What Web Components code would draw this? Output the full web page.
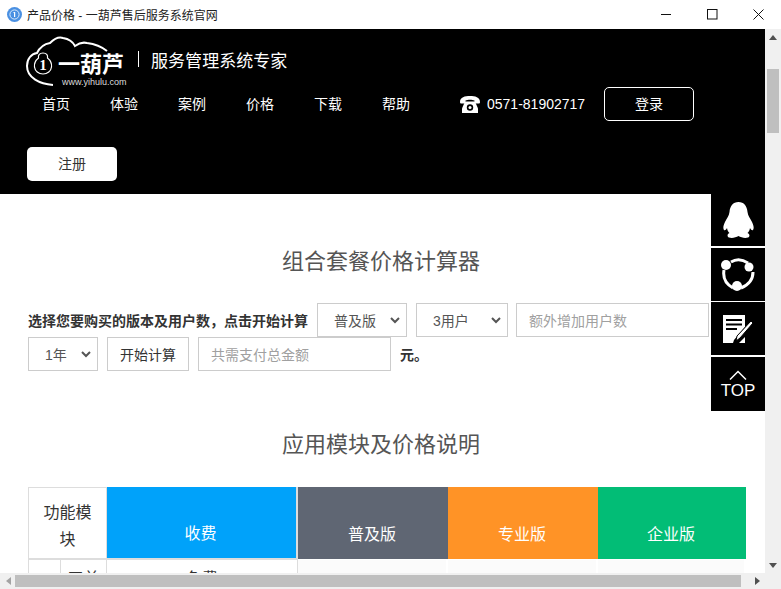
<!DOCTYPE html>
<html lang="zh-CN">
<head>
<meta charset="utf-8">
<title>产品价格 - 一葫芦售后服务系统官网</title>
<style>
html, body { margin: 0; height: 100%; overflow: hidden; background: #fff; }
body { font-family: "Liberation Sans", "Noto Sans CJK SC", sans-serif; }
</style>
</head>
<body>
<app-window title-text="产品价格 - 一葫芦售后服务系统官网">
  <site-header></site-header>
  <price-section heading="组合套餐价格计算器" gap="23">
    <price-calculator></price-calculator>
  </price-section>
  <price-section heading="应用模块及价格说明" gap="24">
    <module-table></module-table>
  </price-section>
  <side-tools slot="overlay"></side-tools>
</app-window>

<script>
const CJK = '"Liberation Sans", "Noto Sans CJK SC", sans-serif';

class AppWindow extends HTMLElement {
    constructor() {
        super();
        this.shadowDOM = this.attachShadow({ mode: "open" });
    }
    connectedCallback() {
        this.shadowDOM.innerHTML = `
        <style>
        * { box-sizing: border-box; margin: 0; padding: 0; }
        :host { display: grid; grid-template-rows: 29px 1fr 16px; grid-template-columns: 1fr 16px; width: 781px; height: 589px; overflow: hidden; font-family: ${CJK}; }
        .title { grid-column: 1 / 3; display: flex; align-items: center; background: #fff; padding-left: 7px; font-size: 12px; color: #222; }
        .title .fav { width: 15px; height: 15px; margin-right: 5px; }
        .title .name { flex: 1; }
        .ctl { width: 46px; height: 29px; display: flex; align-items: center; justify-content: center; }
        .view { position: relative; overflow: hidden; background: #fff; }
        .vbar { background: #f0f0f0; display: flex; flex-direction: column; align-items: center; }
        .hbar { background: #f0f0f0; display: flex; align-items: center; }
        .arrow { flex: none; display: flex; align-items: center; justify-content: center; width: 16px; height: 16px; }
        .vbar .track { flex: 1; width: 100%; padding: 24px 2px 0; }
        .vbar .thumb { width: 12px; height: 64px; background: #bfbfbf; }
        .hbar .track { flex: 1; height: 100%; padding: 2px 0; }
        .hbar .thumb { width: 726px; height: 12px; margin-left: -1px; background: #bfbfbf; }
        .corner { background: #f0f0f0; }
        </style>
        <div class="title">
            <svg class="fav" viewBox="0 0 15 15"><circle cx="7.5" cy="7.5" r="7.5" fill="#4a90e2"/><circle cx="7.5" cy="7.5" r="4.6" fill="none" stroke="#dcebfb" stroke-width="1"/><path d="M7 5h1.2v5H7zM6 6l1-1v1z" fill="#fff"/></svg>
            <span class="name">${this.getAttribute("title-text")}</span>
            <span class="ctl"><svg width="11" height="11" viewBox="0 0 11 11"><path d="M0 5.5h10" stroke="#111" fill="none"/></svg></span>
            <span class="ctl"><svg width="11" height="11" viewBox="0 0 11 11"><rect x=".5" y=".5" width="9.5" height="9.5" stroke="#111" fill="none"/></svg></span>
            <span class="ctl"><svg width="11" height="11" viewBox="0 0 11 11"><path d="M.5.5l10 10M10.5.5l-10 10" stroke="#111" fill="none"/></svg></span>
        </div>
        <div class="view"><slot></slot><slot name="overlay"></slot></div>
        <div class="vbar">
            <span class="arrow"><svg width="8" height="5" viewBox="0 0 8 5"><path d="M4 0l4 5H0z" fill="#505050"/></svg></span>
            <div class="track"><div class="thumb"></div></div>
            <span class="arrow"><svg width="8" height="5" viewBox="0 0 8 5"><path d="M0 0h8L4 5z" fill="#505050"/></svg></span>
        </div>
        <div class="hbar">
            <span class="arrow"><svg width="5" height="8" viewBox="0 0 5 8"><path d="M5 0v8L0 4z" fill="#a3a3a3"/></svg></span>
            <div class="track"><div class="thumb"></div></div>
            <span class="arrow"><svg width="5" height="8" viewBox="0 0 5 8"><path d="M0 0v8l5-4z" fill="#505050"/></svg></span>
        </div>
        <div class="corner"></div>
        `;
    }
}

class SiteHeader extends HTMLElement {
    constructor() {
        super();
        this.shadowDOM = this.attachShadow({ mode: "open" });
    }
    connectedCallback() {
        const links = ["首页", "体验", "案例", "价格", "下载", "帮助"];
        this.shadowDOM.innerHTML = `
        <style>
        * { box-sizing: border-box; margin: 0; padding: 0; }
        :host { display: block; height: 165px; background: #000; color: #fff; font-family: ${CJK}; }
        .brand { display: flex; align-items: center; height: 58px; padding-left: 24px; }
        .logo { position: relative; width: 104px; height: 53px; flex: none; margin-top: 5px; }
        .logo svg { position: absolute; left: 0; top: 0; }
        .logo b { position: absolute; left: 34px; top: 19px; font-size: 22px; line-height: 24px; font-weight: 700; white-space: nowrap; }
        .logo i { position: absolute; left: 38px; top: 43px; font: normal 9px/10px "Liberation Sans", sans-serif; color: #ddd; white-space: nowrap; }
        .sep { width: 1px; height: 16px; background: #fff; margin: 2px 12px 0 10px; }
        .slogan { font-size: 17px; letter-spacing: .05px; margin-top: 3px; }
        .bar { display: flex; align-items: center; height: 34px; }
        nav { display: flex; padding-left: 22px; }
        nav a { width: 68px; padding-left: 20px; font-size: 14px; line-height: 34px; color: #fff; }
        .phone { display: flex; align-items: center; margin-left: 30px; font-size: 14px; }
        .phone svg { margin-right: 7px; }
        .btn { width: 90px; height: 34px; border-radius: 5px; font-size: 14px; display: flex; align-items: center; justify-content: center; padding-bottom: 2px; }
        .login { border: 1px solid #fff; margin-left: 19px; }
        .reg { background: #fff; color: #333; margin: 26px 0 0 27px; }
        </style>
        <div class="brand">
            <div class="logo">
                <svg width="104" height="53" viewBox="0 0 104 53" fill="none">
                    <path d="M29 51C16 50 3 44 3 32 3 25 7 20 13 19 16 13 20 10 26 9 31 4 36 3 39 4 45 5 49 8 51 12 55 9 59 8 63 9 71 10 78 13 83 17" stroke="#fff" stroke-width="2"/>
                    <path d="M19 19C22.500 19 24 21 23.500 24 26 26 28 29 27.500 33 27 37 23.500 40 19 40 14.500 40 11 37 10.500 33 10 29 12 26 14.500 24 14 21 15.500 19 19 19Z" stroke="#fff" stroke-width="1.200"/>
                    <text x="19" y="36" text-anchor="middle" font-family="Liberation Serif, serif" font-weight="700" font-size="15" fill="#fff">1</text>
                </svg>
                <b>一葫芦</b>
                <i>www.yihulu.com</i>
            </div>
            <span class="sep"></span>
            <span class="slogan">服务管理系统专家</span>
        </div>
        <div class="bar">
            <nav>${links.map(l => `<a>${l}</a>`).join("")}</nav>
            <span class="phone">
                <svg width="20" height="17" viewBox="0 0 20 17"><path d="M0 6C0 1 5 0 10 0s10 1 10 6c0 1-.5 1.500-1.500 1.500H16c-1 0-1.500-.5-1.500-1.500V4.500C13 4 12 3.800 10 3.800S7 4 5.500 4.500V6c0 1-.5 1.500-1.500 1.500H1.500C.5 7.500 0 7 0 6Z" fill="#fff"/><path d="M5 5.500h10l3 7v4.500H2v-4.500Z" fill="#fff"/><circle cx="10" cy="11.500" r="3.200" fill="#000"/><circle cx="10" cy="11.500" r="1.500" fill="#fff"/></svg>
                0571-81902717
            </span>
            <span class="btn login">登录</span>
        </div>
        <div class="btn reg">注册</div>
        `;
    }
}

class PriceSection extends HTMLElement {
    constructor() {
        super();
        this.shadowDOM = this.attachShadow({ mode: "open" });
    }
    connectedCallback() {
        this.shadowDOM.innerHTML = `
        <style>
        * { box-sizing: border-box; margin: 0; padding: 0; }
        :host { display: block; padding: 50px 0 0 28px; font-family: ${CJK}; }
        h2 { width: 706px; font-size: 22px; font-weight: 400; line-height: 36px; text-align: center; color: #555; margin-bottom: ${this.getAttribute("gap")}px; }
        </style>
        <h2>${this.getAttribute("heading")}</h2>
        <slot></slot>
        `;
    }
}

class PriceCalculator extends HTMLElement {
    constructor() {
        super();
        this.shadowDOM = this.attachShadow({ mode: "open" });
    }
    connectedCallback() {
        this.shadowDOM.innerHTML = `
        <style>
        * { box-sizing: border-box; margin: 0; padding: 0; }
        :host { display: block; height: 74px; font-family: ${CJK}; color: #333; }
        .row { display: flex; align-items: center; height: 34px; }
        b { font-size: 14px; font-weight: 700; width: 289px; color: #333; }
        .field { height: 34px; border: 1px solid #ccc; background: #fff; font: 14px ${CJK}; color: #555; display: flex; align-items: center; }
        .sel { position: relative; padding-left: 16px; justify-content: flex-start; margin-right: 9px; }
        .sel svg { position: absolute; right: 6px; top: 13px; }
        .inp { padding-left: 12px; color: #a0a0a0; font-size: 14px; width: 193px; }
        .go { width: 82px; justify-content: center; margin-right: 9px; color: #333; }
        .unit { font-size: 14px; font-weight: 700; margin-left: 9px; }
        </style>
        <div class="row">
            <b>选择您要购买的版本及用户数，点击开始计算</b>
            <span class="field sel" style="width:90px">普及版${this.chevron()}</span>
            <span class="field sel" style="width:92px;margin-right:8px">3用户${this.chevron()}</span>
            <span class="field inp">额外增加用户数</span>
        </div>
        <div class="row">
            <span class="field sel" style="width:70px">1年${this.chevron()}</span>
            <span class="field go">开始计算</span>
            <span class="field inp">共需支付总金额</span>
            <span class="unit">元。</span>
        </div>
        `;
    }
    chevron() {
        return `<svg width="10" height="7" viewBox="0 0 10 7"><path d="M1 1l4 4 4-4" fill="none" stroke="#555" stroke-width="2"/></svg>`;
    }
}

class ModuleTable extends HTMLElement {
    constructor() {
        super();
        this.shadowDOM = this.attachShadow({ mode: "open" });
    }
    connectedCallback() {
        this.shadowDOM.innerHTML = `
        <style>
        * { box-sizing: border-box; margin: 0; padding: 0; }
        :host { display: block; font-family: ${CJK}; }
        table { border-collapse: separate; border-spacing: 0; table-layout: fixed; width: 718px; font-size: 16px; color: #333; }
        td, th { font-weight: 400; text-align: center; border: 1px solid #ddd; border-width: 0 1px 1px 0; }
        .head th { height: 73px; border: 0; color: #fff; padding: 19px 2px 0 0; border-bottom: 1px solid #fff; }
        .head .mod { border: 1px solid #ddd; border-bottom: 2px solid #ddd; color: #333; line-height: 27px; padding: 11px 12px 0; vertical-align: top; }
        .head .fee { background: #00a2fa; border-right: 2px solid #ddd; border-bottom: 2px solid #ddd; }
        .plain { background: #5f6673; }
        .pro { background: #ff9326; }
        .ent { background: #02bd76; }
        .gap { border-right: 2px solid #fff; }
        .body td { height: 40px; padding-top: 5px; vertical-align: top; }
        .body td:first-child { border-left: 1px solid #ddd; }
        .body .off { background: #fbfbfb; border: 0; border-right: 2px solid #fff; }
        </style>
        <table>
            <colgroup><col style="width:33px"><col style="width:46px"><col style="width:191px"><col style="width:150px"><col style="width:150px"><col style="width:148px"></colgroup>
            <tr class="head">
                <th class="mod" colspan="2">功能模块</th>
                <th class="fee">收费</th>
                <th class="plain gap">普及版</th>
                <th class="pro gap">专业版</th>
                <th class="ent">企业版</th>
            </tr>
            <tr class="body">
                <td></td><td>工单</td><td>免费</td>
                <td class="off"></td><td class="off"></td><td class="off"></td>
            </tr>
        </table>
        `;
    }
}

class SideTools extends HTMLElement {
    constructor() {
        super();
        this.shadowDOM = this.attachShadow({ mode: "open" });
    }
    connectedCallback() {
        this.shadowDOM.innerHTML = `
        <style>
        * { box-sizing: border-box; margin: 0; padding: 0; }
        :host { position: absolute; right: 0; top: 165px; display: flex; flex-direction: column; gap: 2px; width: 54px; font-family: ${CJK}; }
        .tool { background: #000; height: 52px; display: flex; align-items: center; justify-content: center; flex-direction: column; color: #fff; }
        .top { font-size: 17px; line-height: 16px; margin-top: 3px; }
        </style>
        <div class="tool">
            <svg width="31" height="36" viewBox="0 0 31 36"><path d="M15.500 0C21 0 24 4 24.500 10 25 14 27 16 29 20 31 24 31 27 30 28 29 29 27.500 27 27 26 26.500 29 25.500 30 24.500 31 27 32 27 34.500 25 35.500 22 36.500 18 35.500 15.500 34 13 35.500 9 36.500 6 35.500 4 34.500 4 32 6.500 31 5.500 30 4.500 29 4 26 3.500 27 2 29 1 28 0 27 0 24 2 20 4 16 6 14 6.500 10 7 4 10 0 15.500 0Z" fill="#fff"/></svg>
        </div>
        <div class="tool" style="height:53px">
            <svg width="34" height="34" viewBox="0 0 34 34" fill="none"><path d="M10 4Q18 -1 27 5M3 12Q1 24 12 30M32 14Q32 25 20 30" stroke="#fff" stroke-width="3"/><circle cx="5" cy="7" r="5" fill="#fff"/><circle cx="28" cy="9" r="4.500" fill="#fff"/><circle cx="16" cy="28" r="5" fill="#fff"/></svg>
        </div>
        <div class="tool" style="height:53px;margin-top:-1px">
            <svg width="32" height="30" viewBox="0 0 32 30"><path d="M1 1h22v12L12 26l-1 3H1Z" fill="#fff"/><path d="M4 6h16M4 10.500h16M4 15h11" stroke="#000" stroke-width="2" fill="none"/><path d="M29 7l2 2-13 15-4 3 1-5Z" fill="#fff" stroke="#000" stroke-width="1"/><path d="M22 29h1v-6l-6 6Z" fill="#fff"/></svg>
        </div>
        <div class="tool" style="height:54px">
            <svg width="18" height="10" viewBox="0 0 18 10"><path d="M1 9.500l8-8 8 8" fill="none" stroke="#fff" stroke-width="1.500"/></svg>
            <span class="top">TOP</span>
        </div>
        `;
    }
}

customElements.define("app-window", AppWindow);
customElements.define("site-header", SiteHeader);
customElements.define("price-section", PriceSection);
customElements.define("price-calculator", PriceCalculator);
customElements.define("module-table", ModuleTable);
customElements.define("side-tools", SideTools);
</script>
</body>
</html>
